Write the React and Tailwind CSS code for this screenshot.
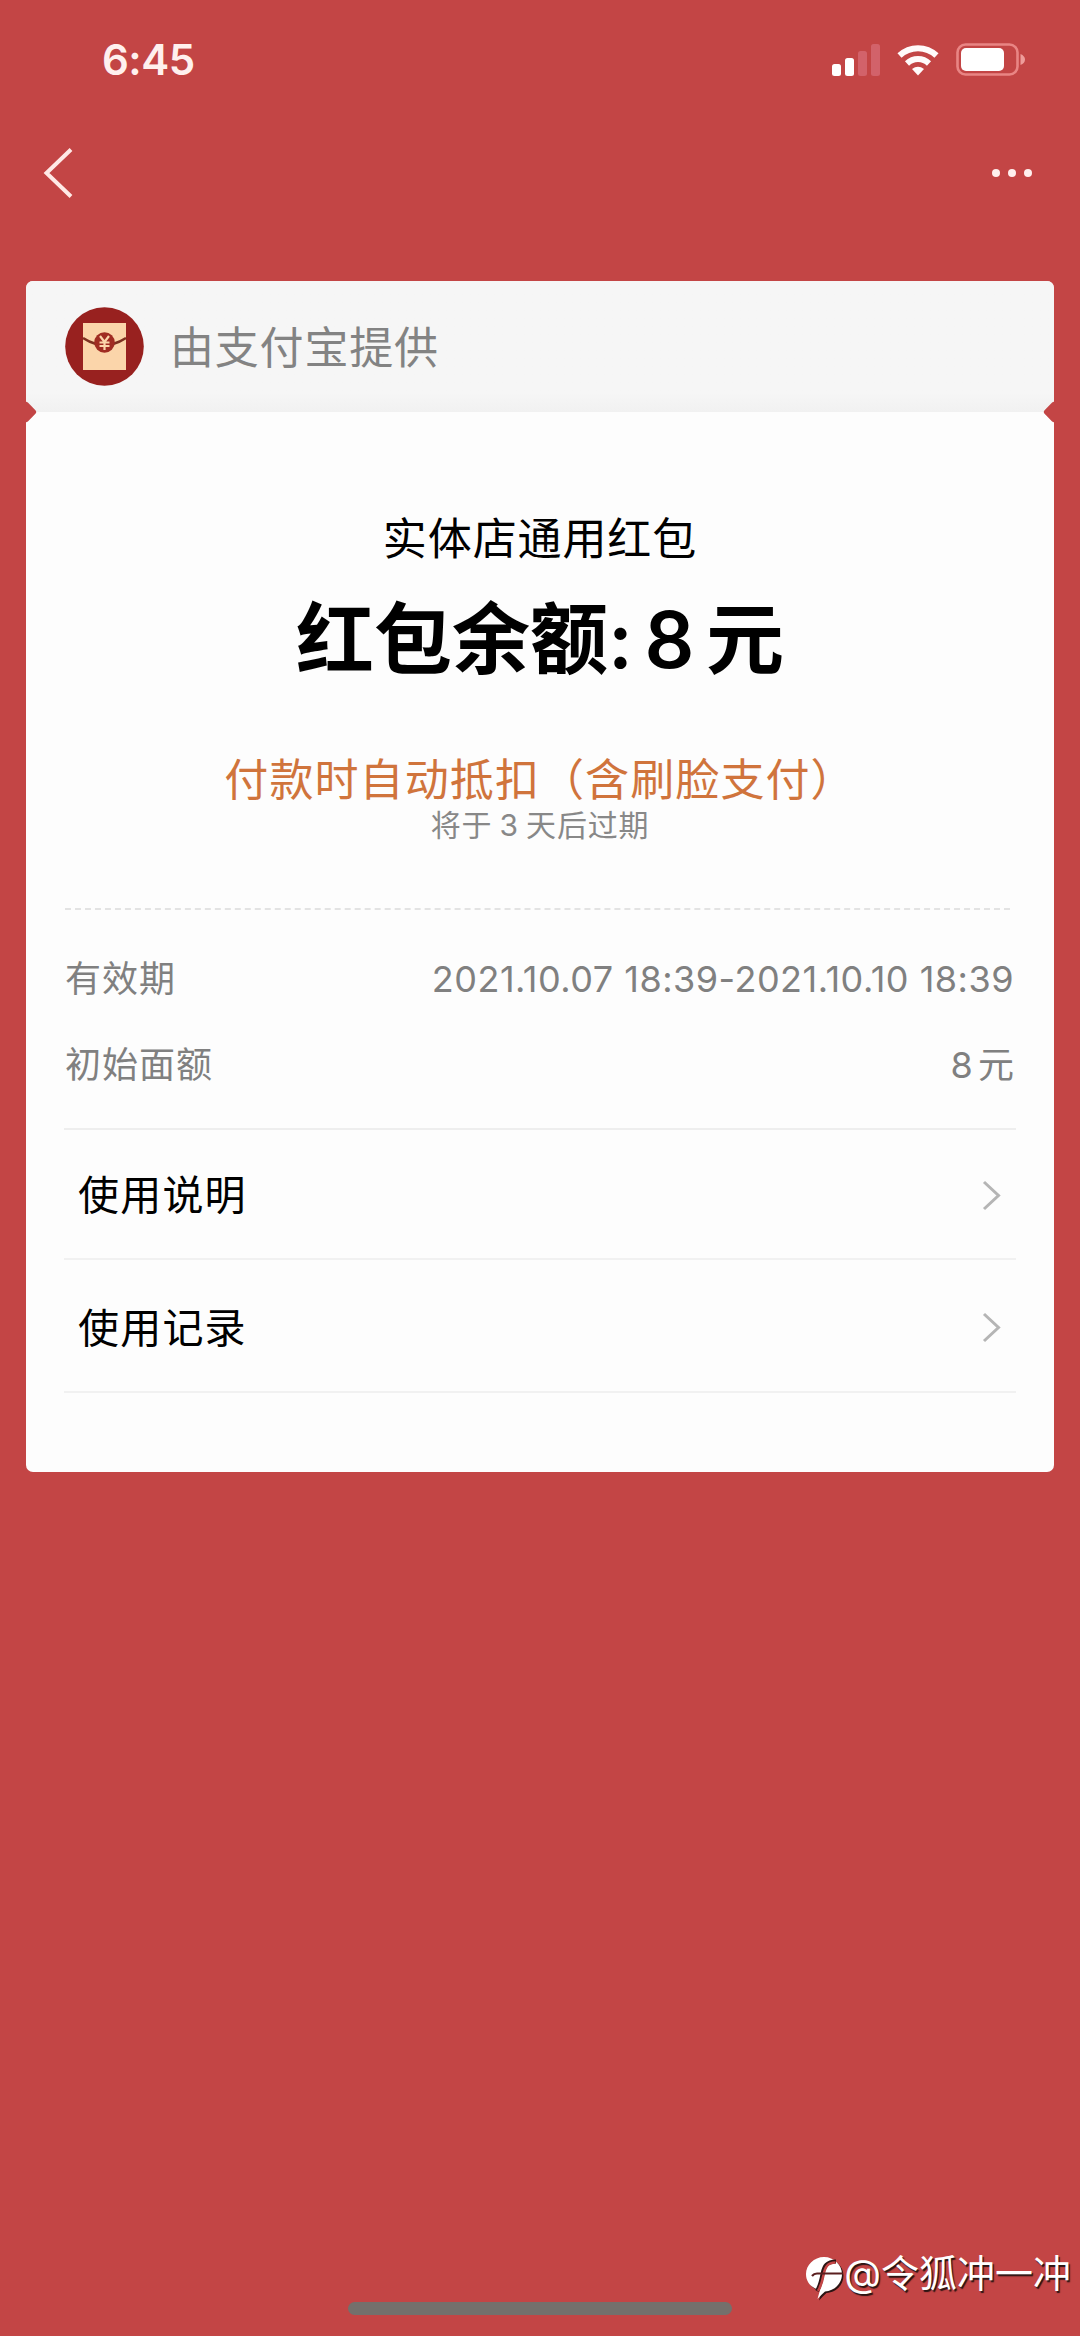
const details = [
  { label: '有效期', value: '2021.10.07 18:39-2021.10.10 18:39', valueClass: 'tracking-[0.5px]' },
  { label: '初始面额', value: '8 元', valueClass: '[word-spacing:-5px]' },
];

function StatusBar() {
  return (
    <div className="flex h-[120px] items-center justify-between pl-[102px] pr-[54px] text-[#fff0ee]">
      <span className="text-[42px] font-semibold leading-[60px] tracking-[-0.5px]">6:45</span>
      <div className="flex items-center">
        <svg width="48" height="32" viewBox="0 0 48 32" fill="#fff">
          <rect x="0" y="20" width="9" height="12" rx="2.5" />
          <rect x="13" y="14" width="9" height="18" rx="2.5" />
          <rect x="26" y="7" width="9" height="25" rx="2.5" fill="#d2626a" />
          <rect x="39" y="0" width="9" height="32" rx="2.5" fill="#d2626a" />
        </svg>
        <svg className="ml-[17px]" width="42" height="32" viewBox="0 0 42 32" fill="none" stroke="#fffafa">
          <path d="M2.5 11.5A27 27 0 0 1 39.5 11.5" strokeWidth="6" />
          <path d="M10 19.5A16 16 0 0 1 32 19.5" strokeWidth="6" />
          <path d="M15 25Q21 20.5 27 25L21 31.5Z" fill="#fffafa" stroke="none" />
        </svg>
        <svg className="ml-[17px]" width="70" height="34" viewBox="0 0 70 34">
          <rect x="1.5" y="1.5" width="60" height="30" rx="8" fill="none" stroke="#e98584" strokeWidth="2.6" />
          <rect x="5" y="5" width="43" height="23" rx="5" fill="#fff" />
          <path d="M64.5 11Q69 13 69 16.5Q69 20 64.5 22Z" fill="#ee9c9a" />
        </svg>
      </div>
    </div>
  );
}

function NavBar() {
  return (
    <div className="flex h-[105px] items-center justify-between pl-[43px] pr-[48px]">
      <svg width="30" height="50" viewBox="0 0 30 50" fill="none" stroke="#ffe9e6" strokeWidth="4">
        <path d="M28 1.5L3.5 25L28 48.5" />
      </svg>
      <div className="flex gap-2">
        <span className="size-[8px] rounded-full bg-[#ffefed]" />
        <span className="size-[8px] rounded-full bg-[#ffefed]" />
        <span className="size-[8px] rounded-full bg-[#ffefed]" />
      </div>
    </div>
  );
}

function RedPacketIcon() {
  return (
    <svg width="79" height="79" viewBox="0 0 79 79">
      <circle cx="39.5" cy="39.5" r="39.3" fill="#98211f" />
      <rect x="18" y="16" width="43" height="47" fill="#fbd5aa" />
      <path d="M18 31Q24 35 31 37M48 37Q55 35 61 31" fill="none" stroke="#7d3020" strokeWidth="2.6" />
      <circle cx="39.5" cy="35.5" r="10.3" fill="#a02c22" />
      <path d="M35 29L39.5 35L44 29M39.5 35V43M34.5 35.5H44.5M34.5 39H44.5" fill="none" stroke="#fbd5aa" strokeWidth="2.2" />
    </svg>
  );
}

function Chevron() {
  return (
    <svg width="19" height="31" viewBox="0 0 19 31" fill="none" stroke="#b5b5b5" strokeWidth="3">
      <path d="M2 2L16.5 15.5L2 29" />
    </svg>
  );
}

function LinkRow({ text, className }) {
  return (
    <div className={`flex items-center justify-between border-b-2 border-[#f1f1f1] pl-[14px] pr-[15px] ${className}`}>
      <span className="text-[41px] leading-[60px] tracking-[1.2px] text-black">{text}</span>
      <Chevron />
    </div>
  );
}

function Watermark() {
  return (
    <div className="absolute right-[9px] top-[2245px] flex items-center">
      <svg className="mt-[12px]" width="38" height="44" viewBox="0 0 38 44">
        <path d="M18 0C28 0 36 8 36 17C36 27 28 34 19 34.5Q16 37 11.5 42L14 33C5 31 0 25 0 17C0 8 8 0 18 0Z" fill="#2b1413" transform="translate(1.5 1.5)" />
        <path d="M18 0C28 0 36 8 36 17C36 27 28 34 19 34.5Q16 37 11.5 42L14 33C5 31 0 25 0 17C0 8 8 0 18 0Z" fill="#fff" />
        <path d="M30 4.5C21 4.5 18 9 16.5 17C15 25 14 29 11 34" fill="none" stroke="#2b1413" strokeWidth="4" />
        <path d="M29.5 5.5C21.5 5.5 19 10 17.5 18C16 26 14.5 30 12 34" fill="none" stroke="#c34545" strokeWidth="2.6" />
        <path d="M6 19Q8 16.5 11 16.5H37" fill="none" stroke="#5a1f1f" strokeWidth="2.2" />
      </svg>
      <span className="text-[38px] leading-[46px] text-white [text-shadow:1.5px_1.5px_1px_#2b1413]">@令狐冲一冲</span>
    </div>
  );
}

export default function App() {
  return (
    <div className="relative h-[2336px] w-[1080px] overflow-hidden bg-[#c34545] font-['Inter','Noto_Sans_CJK_SC',sans-serif]">
      <StatusBar />
      <NavBar />

      <div className="relative mx-[26px] mt-[56px] h-[1191px] overflow-hidden rounded-[7px] bg-[#fdfdfd]">
        <div className="flex h-[131px] items-center gap-[26px] bg-linear-to-b from-[#f6f6f6] from-85% to-[#f1f1f1] pl-[39px]">
          <RedPacketIcon />
          <span className="pt-[3px] text-[44px] leading-[60px] tracking-[0.8px] text-[#838383]">由支付宝提供</span>
        </div>
        <span className="absolute -left-[8px] top-[123px] size-[16px] rotate-45 rounded-[3px] bg-[#c34545]" />
        <span className="absolute -right-[8px] top-[123px] size-[16px] rotate-45 rounded-[3px] bg-[#c34545]" />

        <div className="flex flex-col items-center pt-[97px] text-black">
          <p className="text-[44px] leading-[60px] tracking-[0.9px]">实体店通用红包</p>
          <h1 className="mt-[21px] whitespace-nowrap text-[78px] font-semibold leading-[100px] [font-feature-settings:'calt'_0] [word-spacing:-8px]">
            红包余额: 8 元
          </h1>
          <p className="mt-[65px] text-[44px] leading-[50px] tracking-[1.1px] text-[#d0743c]">付款时自动抵扣（含刷脸支付）</p>
          <p className="mt-[2px] text-[30px] leading-[36px] tracking-[0.8px] text-[#888] [word-spacing:-2px]">将于 3 天后过期</p>
        </div>

        <div className="ml-[39px] mr-[44px] mt-[65px] border-t-2 border-dashed border-[#e3e3e3]" />

        <div className="mt-[44px] flex flex-col gap-[36px] pl-[39px] pr-[40px] text-[36px] leading-[50px] text-[#808080]">
          {details.map((item) => (
            <div key={item.label} className="flex justify-between">
              <span className="tracking-[1px]">{item.label}</span>
              <span className={item.valueClass}>{item.value}</span>
            </div>
          ))}
        </div>

        <div className="mx-[38px] mt-[38px] border-t-2 border-[#eeeeee]">
          <LinkRow text="使用说明" className="h-[130px] pt-[2px]" />
          <LinkRow text="使用记录" className="h-[133px] pt-[4px]" />
        </div>
      </div>

      <Watermark />
      <div className="absolute left-[348px] top-[2302px] h-[13px] w-[384px] rounded-full bg-[#74706c]" />
    </div>
  );
}
